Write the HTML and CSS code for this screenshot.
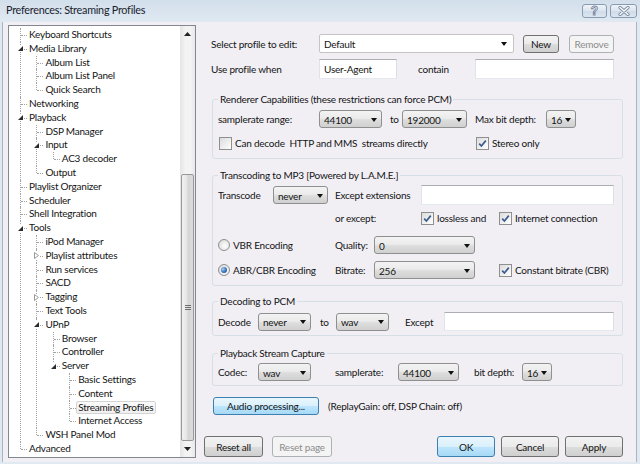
FILE: index.html
```html
<!DOCTYPE html>
<html>
<head>
<meta charset="utf-8">
<title>Preferences: Streaming Profiles</title>
<link rel="stylesheet" href="styles.css">
</head>
<body>
<div class="window">
  <div class="titlebar">
    <span class="title">Preferences: Streaming Profiles</span>
    <div class="caption-btns">
      <span class="cap-btn help">?</span>
      <span class="cap-btn close">
        <svg width="12" height="10" viewBox="0 0 12 10"><path d="M2 1.5 L10 8.5 M10 1.5 L2 8.5" stroke="#7a8ba1" stroke-width="3.2" stroke-linecap="round"/><path d="M2 1.5 L10 8.5 M10 1.5 L2 8.5" stroke="#ffffff" stroke-width="1.4" stroke-linecap="round"/></svg>
      </span>
    </div>
  </div>
  <div class="client">
    <div class="treebox">
      <ul class="tree">
        <li><span class="lbl">Keyboard Shortcuts</span></li>
        <li class="open"><span class="exp"><svg width="7" height="7" viewBox="0 0 7 7"><polygon points="6,1 6,6 1,6" fill="#2b2b2b"/></svg></span><span class="lbl">Media Library</span>
          <ul>
            <li><span class="lbl">Album List</span></li>
            <li><span class="lbl">Album List Panel</span></li>
            <li><span class="lbl">Quick Search</span></li>
          </ul>
        </li>
        <li><span class="lbl">Networking</span></li>
        <li class="open"><span class="exp"><svg width="7" height="7" viewBox="0 0 7 7"><polygon points="6,1 6,6 1,6" fill="#2b2b2b"/></svg></span><span class="lbl">Playback</span>
          <ul>
            <li><span class="lbl">DSP Manager</span></li>
            <li class="open"><span class="exp"><svg width="7" height="7" viewBox="0 0 7 7"><polygon points="6,1 6,6 1,6" fill="#2b2b2b"/></svg></span><span class="lbl">Input</span>
              <ul>
                <li><span class="lbl">AC3 decoder</span></li>
              </ul>
            </li>
            <li><span class="lbl">Output</span></li>
          </ul>
        </li>
        <li><span class="lbl">Playlist Organizer</span></li>
        <li><span class="lbl">Scheduler</span></li>
        <li><span class="lbl">Shell Integration</span></li>
        <li class="open"><span class="exp"><svg width="7" height="7" viewBox="0 0 7 7"><polygon points="6,1 6,6 1,6" fill="#2b2b2b"/></svg></span><span class="lbl">Tools</span>
          <ul>
            <li><span class="lbl">iPod Manager</span></li>
            <li><span class="exp"><svg width="7" height="7" viewBox="0 0 7 7"><polygon points="1.5,0.5 5.5,3.5 1.5,6.5" fill="#fff" stroke="#9a9a9a" stroke-width="1"/></svg></span><span class="lbl">Playlist attributes</span></li>
            <li><span class="lbl">Run services</span></li>
            <li><span class="lbl">SACD</span></li>
            <li><span class="exp"><svg width="7" height="7" viewBox="0 0 7 7"><polygon points="1.5,0.5 5.5,3.5 1.5,6.5" fill="#fff" stroke="#9a9a9a" stroke-width="1"/></svg></span><span class="lbl">Tagging</span></li>
            <li><span class="lbl">Text Tools</span></li>
            <li class="open"><span class="exp"><svg width="7" height="7" viewBox="0 0 7 7"><polygon points="6,1 6,6 1,6" fill="#2b2b2b"/></svg></span><span class="lbl">UPnP</span>
              <ul>
                <li><span class="lbl">Browser</span></li>
                <li><span class="lbl">Controller</span></li>
                <li class="open"><span class="exp"><svg width="7" height="7" viewBox="0 0 7 7"><polygon points="6,1 6,6 1,6" fill="#2b2b2b"/></svg></span><span class="lbl">Server</span>
                  <ul>
                    <li><span class="lbl">Basic Settings</span></li>
                    <li><span class="lbl">Content</span></li>
                    <li><span class="lbl sel">Streaming Profiles</span></li>
                    <li><span class="lbl">Internet Access</span></li>
                  </ul>
                </li>
              </ul>
            </li>
            <li><span class="lbl">WSH Panel Mod</span></li>
          </ul>
        </li>
        <li><span class="lbl">Advanced</span></li>
      </ul>
      <div class="vscroll">
        <div class="sb-btn"><svg width="7" height="4" viewBox="0 0 7 4"><polygon points="3.5,0 7,4 0,4" fill="#222"/></svg></div>
        <div class="sb-track"></div>
        <div class="sb-thumb"><svg width="6" height="5" viewBox="0 0 6 5"><path d="M0 0.5 H6 M0 2.5 H6 M0 4.5 H6" stroke="#6f6f6f" stroke-width="1"/></svg></div>
        <div class="sb-btn down"><svg width="7" height="4" viewBox="0 0 7 4"><polygon points="0,0 7,0 3.5,4" fill="#222"/></svg></div>
      </div>
    </div>

    <div class="pane">
      <div class="top-row h19">
        <span class="cell w108">Select profile to edit:</span>
        <div class="combo combo-white w195"><span>Default</span></div>
        <button class="btn h18 w36 ml9">New</button>
        <button class="btn btn-disabled h18 w45 ml10">Remove</button>
      </div>
      <div class="top-row h20 mt6">
        <span class="cell w108">Use profile when</span>
        <input class="field w78" type="text" value="User-Agent">
        <span class="cell ml21 w57">contain</span>
        <input class="field w139" type="text" value="">
      </div>

      <div class="group g1">
        <div class="group-title">Renderer Capabilities (these restrictions can force PCM)</div>
        <div class="row h18 mt4">
          <span class="cell w101">samplerate range:</span>
          <div class="combo w63"><span>44100</span></div>
          <span class="cell ml8 w12">to</span>
          <div class="combo w65"><span>192000</span></div>
          <span class="cell ml8 w71">Max bit depth:</span>
          <div class="combo w30"><span>16</span></div>
        </div>
        <div class="row h14 mt8">
          <label class="check w257 ml1"><span class="box"></span>Can decode&nbsp; HTTP and MMS&nbsp; streams directly</label>
          <label class="check"><span class="box"><svg width="11" height="11" viewBox="0 0 11 11"><path d="M2.2 5.6 L4.4 8 L8.8 2.6" fill="none" stroke="#3d5b8f" stroke-width="1.7"/></svg></span>Stereo only</label>
        </div>
      </div>

      <div class="group g2">
        <div class="group-title">Transcoding to MP3 [Powered by L.A.M.E.]</div>
        <div class="row h20 mt3">
          <span class="cell w55">Transcode</span>
          <div class="combo w55"><span>never</span></div>
          <span class="cell ml7 w86">Except extensions</span>
          <input class="field w193" type="text" value="">
        </div>
        <div class="row h14 mt6">
          <span class="cell w117"></span>
          <span class="cell w86">or except:</span>
          <label class="check w78"><span class="box"><svg width="11" height="11" viewBox="0 0 11 11"><path d="M2.2 5.6 L4.4 8 L8.8 2.6" fill="none" stroke="#3d5b8f" stroke-width="1.7"/></svg></span>lossless and</label>
          <label class="check"><span class="box"><svg width="11" height="11" viewBox="0 0 11 11"><path d="M2.2 5.6 L4.4 8 L8.8 2.6" fill="none" stroke="#3d5b8f" stroke-width="1.7"/></svg></span>Internet connection</label>
        </div>
        <div class="row h18 mt11">
          <label class="check w117"><span class="radio"></span>VBR Encoding</label>
          <span class="cell w39">Quality:</span>
          <div class="combo w101"><span>0</span></div>
        </div>
        <div class="row h18 mt7">
          <label class="check w117"><span class="radio on"></span>ABR/CBR Encoding</label>
          <span class="cell w39">Bitrate:</span>
          <div class="combo w101"><span>256</span></div>
          <label class="check ml24"><span class="box"><svg width="11" height="11" viewBox="0 0 11 11"><path d="M2.2 5.6 L4.4 8 L8.8 2.6" fill="none" stroke="#3d5b8f" stroke-width="1.7"/></svg></span>Constant bitrate (CBR)</label>
        </div>
      </div>

      <div class="group g3">
        <div class="group-title">Decoding to PCM</div>
        <div class="row h19 mt4">
          <span class="cell w40">Decode</span>
          <div class="combo w53"><span>never</span></div>
          <span class="cell ml9 w16">to</span>
          <div class="combo w53"><span>wav</span></div>
          <span class="cell ml16 w39">Except</span>
          <input class="field h19 w170" type="text" value="">
        </div>
      </div>

      <div class="group g4">
        <div class="group-title">Playback Stream Capture</div>
        <div class="row h18 mt3">
          <span class="cell w40">Codec:</span>
          <div class="combo w53"><span>wav</span></div>
          <span class="cell ml24 w63">samplerate:</span>
          <div class="combo w61"><span>44100</span></div>
          <span class="cell ml15 w48">bit depth:</span>
          <div class="combo w30"><span>16</span></div>
        </div>
      </div>

      <div class="audio-row">
        <button class="btn btn-blue h18 w106">Audio processing...</button>
        <span class="cell ml9">(ReplayGain: off, DSP Chain: off)</span>
      </div>

      <div class="bottom-bar">
        <div class="btn-group">
          <button class="btn w59">Reset all</button>
          <button class="btn btn-disabled w60 ml9">Reset page</button>
        </div>
        <div class="btn-group">
          <button class="btn btn-blue w58">OK</button>
          <button class="btn w58 ml6">Cancel</button>
          <button class="btn w58 ml6">Apply</button>
        </div>
      </div>
    </div>
  </div>
</div>
</body>
</html>
```

FILE: styles.css
```css
* { box-sizing: border-box; }
html, body { margin: 0; padding: 0; }
body {
  width: 640px;
  height: 464px;
  overflow: hidden;
  font-family: Lato, "Liberation Sans", sans-serif;
  font-size: 10px;
  letter-spacing: -0.22px;
  color: #141414;
  background: #dfe8f1;
}

/* window frame */
.window {
  width: 640px;
  height: 464px;
  display: flex;
  flex-direction: column;
  padding: 0 3px 2px 2px;
  background: linear-gradient(#d2deea, #e0e9f2 22px, #e0e9f2);
}
.titlebar {
  flex: none;
  height: 22px;
  display: flex;
  justify-content: space-between;
  align-items: flex-start;
}
.title {
  font-size: 10.8px;
  letter-spacing: -0.25px;
  line-height: 20px;
  padding-left: 4px;
  color: #18222e;
}
.caption-btns {
  display: flex;
  gap: 3px;
  margin-top: 4px;
}
.cap-btn {
  width: 25px;
  height: 14px;
  border: 1px solid #8a9ab0;
  border-radius: 3px;
  background: linear-gradient(#eef3f8, #dbe5ef 50%, #cfdbe8 50%, #dce6f0);
  display: flex;
  align-items: center;
  justify-content: center;
}
.help {
  font-family: "Liberation Sans", sans-serif;
  font-weight: bold;
  font-size: 12px;
  letter-spacing: 0;
  line-height: 1;
  color: #ffffff;
  -webkit-text-stroke: 0.9px #7a8ba1;
}
.close { width: 27px; }
.close svg { display: block; }

.client {
  flex: 1;
  display: flex;
  background: #f1eff4;
  border-left: 1px solid #a9b5c2;
  border-right: 1px solid #a9b5c2;
  padding: 3px 0 0 5px;
}

/* tree */
.treebox {
  flex: none;
  width: 188px;
  height: 433px;
  border: 1px solid #828790;
  background: #fff;
  display: flex;
}
.tree, .tree ul {
  list-style: none;
  margin: 0;
}
.tree {
  flex: 1;
  padding: 2px 0 0 11px;
  overflow: hidden;
}
.tree ul { padding: 0 0 0 7.4px; }
.tree li {
  position: relative;
  padding-left: 9px;
  line-height: 13.8px;
  white-space: nowrap;
}
.tree li::before {
  content: "";
  position: absolute;
  left: 0;
  top: 0;
  bottom: 0;
  border-left: 1px dotted #a3a3a3;
}
.tree li:last-child::before {
  bottom: auto;
  height: 7px;
}
.tree li::after {
  content: "";
  position: absolute;
  left: 1px;
  top: 7px;
  width: 6px;
  border-top: 1px dotted #a3a3a3;
}
.exp {
  position: absolute;
  left: -3px;
  top: 3.5px;
  width: 7px;
  height: 7px;
  background: #fff;
  z-index: 1;
}
.exp svg { display: block; }
.lbl.sel {
  display: inline-block;
  line-height: 11.8px;
  margin-left: -2px;
  padding: 0 2px 0 1px;
  border: 1px solid #d4d4d4;
  border-radius: 2px;
  background: linear-gradient(#fbfbfb, #f0f0f0);
}

/* scrollbar */
.vscroll {
  flex: none;
  width: 15px;
  display: flex;
  flex-direction: column;
  background: linear-gradient(to right, #e4e4e4, #f3f3f3 35%, #f3f3f3 70%, #e8e8e8);
}
.sb-btn {
  flex: none;
  height: 15px;
  display: flex;
  align-items: center;
  justify-content: center;
}
.sb-btn.down { height: 16px; }
.sb-btn svg { display: block; }
.sb-track { flex: 1; }
.sb-thumb {
  flex: none;
  height: 267px;
  margin: 0 1px;
  border: 1px solid #989898;
  border-radius: 2px;
  background: linear-gradient(to right, #f2f2f2, #e4e4e4 45%, #d4d4d4 55%, #dcdcdc);
  display: flex;
  align-items: center;
  justify-content: center;
}
.sb-thumb svg { display: block; }

/* right pane */
.pane {
  flex: none;
  width: 419px;
  margin-left: 8px;
  padding-top: 9px;
  display: flex;
  flex-direction: column;
}
.top-row {
  display: flex;
  align-items: center;
  padding-left: 7px;
}
.row {
  display: flex;
  align-items: center;
}
.cell {
  flex: none;
  white-space: nowrap;
}

.group {
  margin-left: 8px;
  width: 411px;
  border: 1px solid #d5dfe5;
  border-radius: 3px;
  padding: 0 5px;
}
.group-title {
  width: fit-content;
  margin: -8px 0 0 0;
  padding: 0 2px;
  line-height: 14px;
  background: #f1eff4;
  white-space: nowrap;
}
.g1 { margin-top: 20px; padding-bottom: 8px; }
.g2 { margin-top: 16px; padding-bottom: 6px; }
.g3 { margin-top: 15px; padding-bottom: 4px; }
.g4 { margin-top: 17px; padding-bottom: 4px; }

/* controls */
.combo {
  flex: none;
  height: 18px;
  display: flex;
  align-items: center;
  padding: 1px 4px 0 4px;
  border: 1px solid #8e8f8f;
  border-radius: 3px;
  background: linear-gradient(#f3f3f3, #ebebeb 45%, #dddddd 55%, #d0d0d0);
  white-space: nowrap;
}
.combo::after {
  content: "";
  margin-left: auto;
  border-left: 3px solid transparent;
  border-right: 3px solid transparent;
  border-top: 4px solid #111;
}
.combo-white {
  height: 19px;
  padding-right: 6px;
  background: #fff;
  border-color: #c4c4c4;
  border-radius: 2px;
}
.field {
  flex: none;
  height: 20px;
  margin: 0;
  padding: 0 4px;
  border: 1px solid;
  border-color: #abadb3 #dbdfe6 #e3e9ef #e2e3ea;
  background: #fff;
  font: inherit;
  letter-spacing: inherit;
  color: #141414;
  outline: none;
}
.btn {
  flex: none;
  height: 21px;
  margin: 0;
  padding: 0;
  border: 1px solid #707070;
  border-radius: 3px;
  background: linear-gradient(#f2f2f2, #ebebeb 50%, #dddddd 50%, #cfcfcf);
  font: inherit;
  letter-spacing: inherit;
  color: #141414;
}
.btn-blue {
  border-color: #3c7fb1;
  background: linear-gradient(#eaf6fd, #d9f0fc 50%, #bee6fd 50%, #a7d9f5);
}
.btn-disabled {
  border-color: #adb2b5;
  background: #f4f4f4;
  color: #8d8d8d;
}
.check {
  flex: none;
  display: flex;
  align-items: center;
  gap: 3px;
  white-space: nowrap;
}
.box {
  flex: none;
  width: 13px;
  height: 13px;
  border: 1px solid #8e8f8f;
  background: linear-gradient(135deg, #dcdcdc, #f4f4f4 70%, #ffffff);
  display: flex;
  align-items: center;
  justify-content: center;
}
.box svg { display: block; }
.radio {
  flex: none;
  width: 12px;
  height: 12px;
  border: 1px solid #8e8f8f;
  border-radius: 50%;
  background: radial-gradient(circle at 60% 60%, #ffffff, #e6e6e6 60%, #cfcfcf);
  display: flex;
  align-items: center;
  justify-content: center;
}
.radio.on::after {
  content: "";
  width: 6px;
  height: 6px;
  border-radius: 50%;
  background: radial-gradient(circle at 35% 35%, #a9cdf3, #2d6bb5 60%, #1d4a8a);
}

.audio-row {
  display: flex;
  align-items: center;
  margin: 11px 0 0 9px;
  height: 18px;
}
.bottom-bar {
  display: flex;
  justify-content: space-between;
  margin-top: 21px;
}
.btn-group { display: flex; }

/* sizes */
.h14 { height: 14px; }
.h18 { height: 18px; }
.h19 { height: 19px; }
.h20 { height: 20px; }
.mt3 { margin-top: 3px; }
.mt4 { margin-top: 4px; }
.mt6 { margin-top: 6px; }
.mt7 { margin-top: 7px; }
.mt8 { margin-top: 8px; }
.mt11 { margin-top: 11px; }
.ml1 { margin-left: 1px; }
.ml6 { margin-left: 6px; }
.ml7 { margin-left: 7px; }
.ml8 { margin-left: 8px; }
.ml9 { margin-left: 9px; }
.ml10 { margin-left: 10px; }
.ml15 { margin-left: 15px; }
.ml16 { margin-left: 16px; }
.ml21 { margin-left: 21px; }
.ml24 { margin-left: 24px; }
.w12 { width: 12px; }
.w16 { width: 16px; }
.w30 { width: 30px; }
.w36 { width: 36px; }
.w39 { width: 39px; }
.w40 { width: 40px; }
.w45 { width: 45px; }
.w48 { width: 48px; }
.w53 { width: 53px; }
.w55 { width: 55px; }
.w57 { width: 57px; }
.w58 { width: 58px; }
.w59 { width: 59px; }
.w60 { width: 60px; }
.w61 { width: 61px; }
.w63 { width: 63px; }
.w65 { width: 65px; }
.w71 { width: 71px; }
.w78 { width: 78px; }
.w86 { width: 86px; }
.w101 { width: 101px; }
.w106 { width: 106px; }
.w108 { width: 108px; }
.w117 { width: 117px; }
.w139 { width: 139px; }
.w170 { width: 170px; }
.w193 { width: 193px; }
.w195 { width: 195px; }
.w257 { width: 257px; }
```
